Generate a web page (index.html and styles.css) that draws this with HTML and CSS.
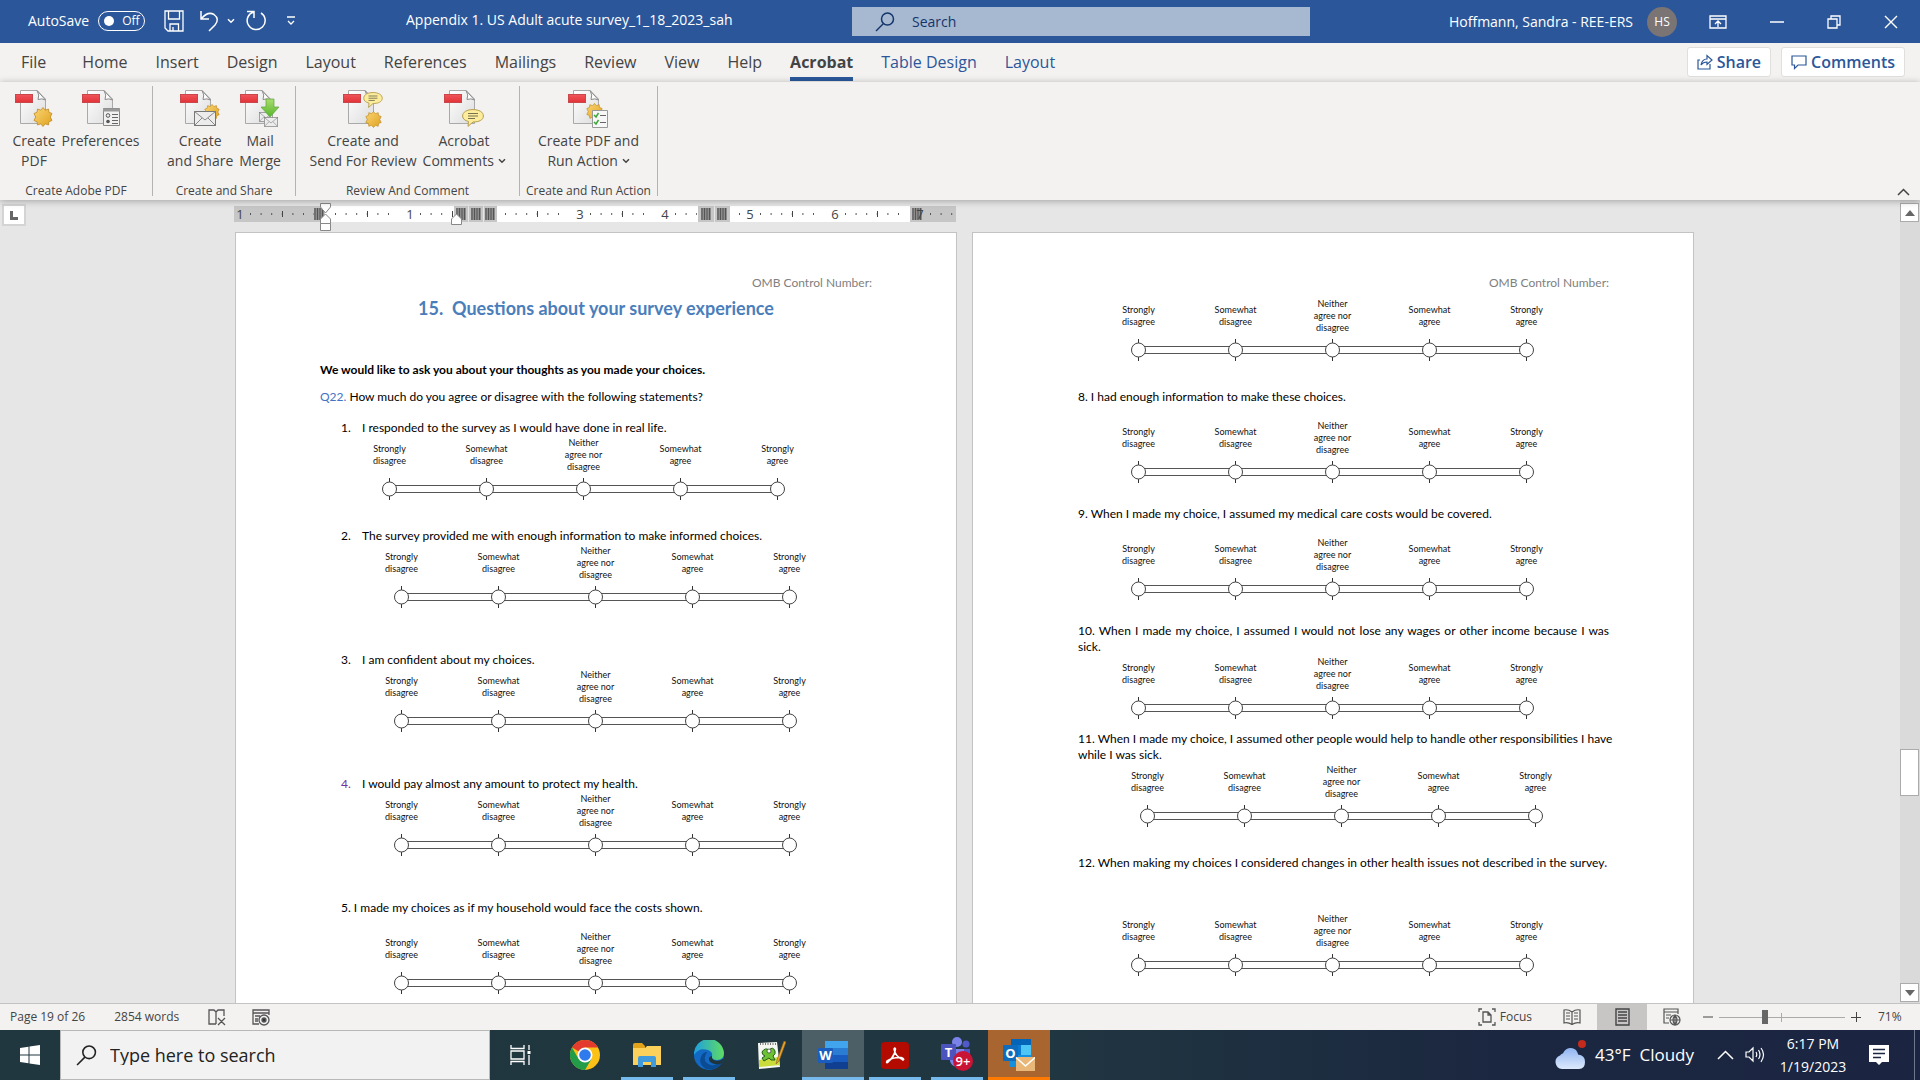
FILE: index.html
```
<!DOCTYPE html>
<html lang="en">
<head>
<meta charset="utf-8">
<title>Appendix 1. US Adult acute survey_1_18_2023_sah</title>
<link rel="stylesheet" href="styles.css">
</head>
<body>
<svg class="defs" aria-hidden="true">
  <defs>
    <linearGradient id="g-page" x1="0" y1="0" x2="1" y2="1"><stop offset="0" stop-color="#fff"/><stop offset="1" stop-color="#dcdcdc"/></linearGradient>
    <linearGradient id="g-red" x1="0" y1="0" x2="0" y2="1"><stop offset="0" stop-color="#f0555a"/><stop offset="1" stop-color="#e23338"/></linearGradient>
    <linearGradient id="g-gold" x1="0" y1="0" x2="1" y2="1"><stop offset="0" stop-color="#fbd574"/><stop offset="1" stop-color="#dfa21f"/></linearGradient>
    <linearGradient id="g-green" x1="0" y1="0" x2="0" y2="1"><stop offset="0" stop-color="#a8dd6e"/><stop offset="1" stop-color="#57b52b"/></linearGradient>
    <linearGradient id="g-edge" x1="0" y1="0" x2="1" y2="0"><stop offset="0" stop-color="#1e9fe0"/><stop offset="1" stop-color="#5fdc62"/></linearGradient>
    <linearGradient id="g-cloud" x1="0" y1="0" x2="0" y2="1"><stop offset="0" stop-color="#8fb4f2"/><stop offset="1" stop-color="#dce9fb"/></linearGradient>
  </defs>
  <symbol id="pdf" viewBox="0 0 38 38">
    <path d="M5.500 .5H22L30.500 9V33.500H5.500Z" fill="url(#g-page)" stroke="#a9a9a9"/>
    <path d="M22 .5Q25 5 23 9.500Q27 8 30.500 10Z" fill="#fff" stroke="#8b8b8b"/>
    <rect x=".5" y="4.500" width="17" height="8" fill="url(#g-red)" stroke="#c9474b"/>
  </symbol>
  <symbol id="star" viewBox="0 0 20 20">
    <path d="M10 .5L12.200 3.200L15.500 2L15.900 5.200L19 6.500L17.300 10L19 13.500L15.900 14.800L15.500 18L12.200 16.800L10 19.500L7.800 16.800L4.500 18L4.100 14.800L1 13.500L2.700 10L1 6.500L4.100 5.200L4.500 2L7.800 3.200Z" fill="url(#g-gold)" stroke="#c08a1e" stroke-width=".8"/>
  </symbol>
  <symbol id="bubble" viewBox="0 0 22 18">
    <path d="M11 .6C17 .6 21.400 3 21.400 7C21.400 11 17 13 11 13L6 17.400L6.500 12.500C3 11.500 .6 10 .6 7C.6 3 5 .6 11 .6Z" fill="#fcec9c" stroke="#b59d4d"/>
    <path d="M6 4.500H16M6 7H16M6 9.500H13" stroke="#77714f" fill="none"/>
  </symbol>
  <symbol id="envelope" viewBox="0 0 22 15">
    <rect x=".5" y=".5" width="21" height="14" fill="#ececec" stroke="#777"/>
    <path d="M.5 .5L11 9L21.500 .5M.5 14.500L8 7M21.500 14.500L14 7" fill="none" stroke="#888"/>
  </symbol>
  <symbol id="lens" viewBox="0 0 20 20">
    <circle cx="12.500" cy="7" r="6" fill="none" stroke="currentColor" stroke-width="1.500"/>
    <path d="M8.500 11.500L1 19" stroke="currentColor" stroke-width="1.500"/>
  </symbol>
  <symbol id="chevron" viewBox="0 0 8 6"><path d="M1 1.200L4 4.200L7 1.200" fill="none" stroke="currentColor" stroke-width="1.500"/></symbol>
  <symbol id="track" viewBox="0 0 485 22">
    <path d="M48 7.500H436M48 14.500H436" stroke="#555"/>
    <path d="M48.500 0V22M145.500 0V22M242.500 0V22M339.500 0V22M436.500 0V22" stroke="#333"/>
    <g fill="#fff" stroke="#444"><circle cx="48.500" cy="11" r="7"/><circle cx="145.500" cy="11" r="7"/><circle cx="242.500" cy="11" r="7"/><circle cx="339.500" cy="11" r="7"/><circle cx="436.500" cy="11" r="7"/></g>
  </symbol>
  <symbol id="colmark" viewBox="0 0 10 12">
    <path d="M0 1H10M0 3H10M0 5H10M0 7H10M0 9H10M0 11H10M1 0V12M3.500 0V12M6 0V12M8.500 0V12" stroke="#555"/>
  </symbol>
</svg>

<header class="titlebar">
  <div class="quick">
    <label class="autosave">AutoSave <button class="toggle" type="button"><span class="knob"></span>Off</button></label>
    <button class="tool" type="button" aria-label="Save"><svg width="20" height="22" viewBox="0 0 20 22" fill="none" stroke="#fff" stroke-width="1.300"><path d="M1 1H19V21H4L1 18Z"/><path d="M4.500 1V9H15.500V1M6 21V14H14.500V21M9 17V21"/></svg></button>
    <button class="tool undo" type="button" aria-label="Undo"><svg width="20" height="22" viewBox="0 0 20 22" fill="none" stroke="#fff" stroke-width="1.500"><path d="M1 1V9H9M1.500 8.500Q8 1 14 4.500Q20 9 15 15L9 21"/></svg></button>
    <button class="tool more" type="button" aria-label="Undo history"><svg width="8" height="6"><use href="#chevron"/></svg></button>
    <button class="tool" type="button" aria-label="Repeat"><svg width="22" height="22" viewBox="0 0 22 22" fill="none" stroke="#fff" stroke-width="1.500"><path d="M2 1.500H9V8M8.500 2A9 9 0 1 0 16 3"/></svg></button>
    <button class="tool customize" type="button" aria-label="Customize toolbar"><svg width="10" height="10" viewBox="0 0 10 10" fill="none" stroke="#fff" stroke-width="1.300"><path d="M1 1H9M2 5L5 8L8 5"/></svg></button>
  </div>
  <h1 class="filename">Appendix 1. US Adult acute survey_1_18_2023_sah</h1>
  <label class="search"><svg width="20" height="20"><use href="#lens"/></svg><input class="search-input" type="text" placeholder="Search" aria-label="Search"></label>
  <div class="account">
    <span class="user">Hoffmann, Sandra - REE-ERS</span>
    <span class="avatar">HS</span>
    <div class="window-buttons">
      <button class="tool" type="button" aria-label="Ribbon display options"><svg width="18" height="14" viewBox="0 0 18 14" fill="none" stroke="#fff" stroke-width="1.300"><path d="M1 1H17V13H1ZM1 4H17M9 12V6M6 9L9 6L12 9"/></svg></button>
      <button class="tool" type="button" aria-label="Minimize"><svg width="14" height="14" viewBox="0 0 14 14" stroke="#fff" stroke-width="1.500"><path d="M0 7H14"/></svg></button>
      <button class="tool" type="button" aria-label="Restore"><svg width="14" height="14" viewBox="0 0 14 14" fill="none" stroke="#fff" stroke-width="1.300"><path d="M1 4H10V13H1ZM4 4V1H13V10H10"/></svg></button>
      <button class="tool" type="button" aria-label="Close"><svg width="14" height="14" viewBox="0 0 14 14" stroke="#fff" stroke-width="1.400"><path d="M1 1L13 13M13 1L1 13"/></svg></button>
    </div>
  </div>
</header>

<nav class="tabs">
  <button class="tab file" type="button">File</button>
  <button class="tab" type="button">Home</button>
  <button class="tab" type="button">Insert</button>
  <button class="tab" type="button">Design</button>
  <button class="tab" type="button">Layout</button>
  <button class="tab" type="button">References</button>
  <button class="tab" type="button">Mailings</button>
  <button class="tab" type="button">Review</button>
  <button class="tab" type="button">View</button>
  <button class="tab" type="button">Help</button>
  <button class="tab active" type="button">Acrobat</button>
  <button class="tab context" type="button">Table Design</button>
  <button class="tab context" type="button">Layout</button>
  <div class="tab-actions">
    <button class="action" type="button"><svg width="16" height="16" viewBox="0 0 16 16" fill="none" stroke="#2b579a" stroke-width="1.200"><path d="M3 6H1V15H13V10M4 11Q5 5 10 5V1.500L15 6L10 10.500V8Q6 8 4 11Z"/></svg>Share</button>
    <button class="action" type="button"><svg width="16" height="16" viewBox="0 0 16 16" fill="none" stroke="#2b579a" stroke-width="1.200"><path d="M1 2H15V11H7L3.500 14.500V11H1Z"/></svg>Comments</button>
  </div>
</nav>

<section class="ribbon">
  <div class="group g-create">
    <div class="commands">
      <button class="command" type="button"><svg width="38" height="38"><use href="#pdf" width="38" height="38"/><use href="#star" x="18" y="17" width="20" height="20"/></svg>Create<br>PDF</button>
      <button class="command" type="button"><svg width="38" height="38"><use href="#pdf" width="38" height="38"/><path d="M21.500 18.500H37.500V35.500H21.500Z" fill="#f1f1f1" stroke="#888"/><path d="M21 20H38" stroke="#999" stroke-width="3"/><circle cx="26" cy="25.500" r="1.800" fill="none" stroke="#555"/><circle cx="26" cy="31.500" r="1.800" fill="#555"/><path d="M30 24.500H36M30 27.500H36M30 30.500H36M30 33.500H36" stroke="#666"/></svg>Preferences</button>
    </div>
    <span class="group-name">Create Adobe PDF</span>
  </div>
  <div class="group g-share">
    <div class="commands">
      <button class="command" type="button"><svg width="40" height="38"><use href="#pdf" width="38" height="38"/><use href="#star" x="24" y="14" width="16" height="16"/><use href="#envelope" x="14" y="21" width="22" height="15"/></svg>Create<br>and Share</button>
      <button class="command" type="button"><svg width="40" height="38"><use href="#pdf" width="38" height="38"/><use href="#envelope" x="19" y="22" width="14" height="10"/><use href="#envelope" x="24" y="27" width="14" height="10"/><path d="M26 9H34V17H39L30 27L21 17H26Z" fill="url(#g-green)" stroke="#5ca33b" stroke-width=".7"/></svg>Mail<br>Merge</button>
    </div>
    <span class="group-name">Create and Share</span>
  </div>
  <div class="group g-review">
    <div class="commands">
      <button class="command" type="button"><svg width="40" height="38"><use href="#pdf" width="38" height="38"/><use href="#bubble" x="20" y="2" width="20" height="16"/><use href="#star" x="22" y="21" width="17" height="17"/></svg>Create and<br>Send For Review</button>
      <button class="command" type="button"><svg width="40" height="38"><use href="#pdf" width="38" height="38"/><use href="#bubble" x="18" y="19" width="22" height="18"/></svg>Acrobat<br>Comments <svg class="drop" width="8" height="6"><use href="#chevron"/></svg></button>
    </div>
    <span class="group-name">Review And Comment</span>
  </div>
  <div class="group g-action">
    <div class="commands">
      <button class="command" type="button"><svg width="40" height="38"><use href="#pdf" width="38" height="38"/><use href="#star" x="18" y="13" width="17" height="17"/><path d="M24.500 20.500H39.500V37.500H24.500Z" fill="#f7f7f7" stroke="#999"/><path d="M26 25L28 27L30.500 23M26 32L28 34L30.500 30" fill="none" stroke="#3da83a" stroke-width="1.500"/><path d="M32 25.500H38M32 32.500H38" stroke="#666"/></svg>Create PDF and<br>Run Action <svg class="drop" width="8" height="6"><use href="#chevron"/></svg></button>
    </div>
    <span class="group-name">Create and Run Action</span>
  </div>
  <button class="collapse" type="button" aria-label="Collapse the ribbon"><svg width="13" height="8" viewBox="0 0 13 8" fill="none" stroke="#444" stroke-width="1.500"><path d="M1 7L6.500 1.500L12 7"/></svg></button>
</section>

<main class="workspace">
  <button class="tab-stop" type="button" aria-label="Tab stop"><svg width="8" height="10" viewBox="0 0 8 10"><path d="M1.500 1V8.500H8" fill="none" stroke="#666" stroke-width="3"/></svg></button>
  <div class="canvas">
    <div class="pages">
      <svg class="ruler" viewBox="0 0 722 28" width="722" height="28">
        <rect y="3" width="722" height="16" fill="#c6c6c6"/>
        <path d="M91 3H220V19H91ZM263 3H464V19H263ZM496 3H676V19H496Z" fill="#fff"/>
        <path d="M234.500 3V19M249.500 3V19M480.500 3V19" stroke="#e6e6e6"/>
        <path d="M16 11H80M101 11H162M186 11H217M271 11H332M356 11H417M441 11H463M505 11H508M526 11H588M611 11H674M696 11H720" stroke="#555" stroke-width="2" stroke-dasharray="1 9.600"/>
        <path d="M48.500 8V14M133.500 8V14M218.500 8V14M303.500 8V14M388.500 8V14M558.500 8V14M643.500 8V14" stroke="#444"/>
        <use href="#colmark" x="80" y="5" width="10" height="12"/><use href="#colmark" x="222" y="5" width="10" height="12"/><use href="#colmark" x="237" y="5" width="10" height="12"/><use href="#colmark" x="251" y="5" width="10" height="12"/><use href="#colmark" x="467" y="5" width="10" height="12"/><use href="#colmark" x="483" y="5" width="10" height="12"/><use href="#colmark" x="678" y="5" width="10" height="12"/>
        <g class="ruler-text"><text x="6" y="16">1</text><text x="176" y="16">1</text><text x="346" y="16">3</text><text x="431" y="16">4</text><text x="516" y="16">5</text><text x="601" y="16">6</text><text x="686" y="16">7</text></g>
        <path d="M86.500 .5H96.500V4L91.500 10L86.500 4ZM91.500 11L96.500 16V20.500H86.500V16ZM86.500 20.500H96.500V27.500H86.500ZM222.500 11L227.500 16V21.500H217.500V16Z" fill="#fff" stroke="#888"/>
      </svg>
      <article class="page">
        <p class="omb">OMB Control Number:</p>
        <h2 class="heading">15.&nbsp; Questions about your survey experience</h2>
        <p class="lead">We would like to ask you about your thoughts as you made your choices.</p>
        <p class="intro"><span class="qnum">Q22.</span> How much do you agree or disagree with the following statements?</p>

        <p class="item first"><span class="num">1.</span>I responded to the survey as I would have done in real life.</p>
        <div class="scale base"><span>Strongly<br>disagree</span><span>Somewhat<br>disagree</span><span>Neither<br>agree nor<br>disagree</span><span>Somewhat<br>agree</span><span>Strongly<br>agree</span><svg class="bar"><use href="#track"/></svg></div>

        <p class="item near"><span class="num">2.</span>The survey provided me with enough information to make informed choices.</p>
        <div class="scale"><span>Strongly<br>disagree</span><span>Somewhat<br>disagree</span><span>Neither<br>agree nor<br>disagree</span><span>Somewhat<br>agree</span><span>Strongly<br>agree</span><svg class="bar"><use href="#track"/></svg></div>

        <p class="item"><span class="num">3.</span>I am confident about my choices.</p>
        <div class="scale"><span>Strongly<br>disagree</span><span>Somewhat<br>disagree</span><span>Neither<br>agree nor<br>disagree</span><span>Somewhat<br>agree</span><span>Strongly<br>agree</span><svg class="bar"><use href="#track"/></svg></div>

        <p class="item"><span class="num revised">4.</span>I would pay almost any amount to protect my health.</p>
        <div class="scale"><span>Strongly<br>disagree</span><span>Somewhat<br>disagree</span><span>Neither<br>agree nor<br>disagree</span><span>Somewhat<br>agree</span><span>Strongly<br>agree</span><svg class="bar"><use href="#track"/></svg></div>

        <p class="item">5. I made my choices as if my household would face the costs shown.</p>
        <div class="scale spaced"><span>Strongly<br>disagree</span><span>Somewhat<br>disagree</span><span>Neither<br>agree nor<br>disagree</span><span>Somewhat<br>agree</span><span>Strongly<br>agree</span><svg class="bar"><use href="#track"/></svg></div>
      </article>
      <article class="page">
        <p class="omb">OMB Control Number:</p>
        <div class="scale top"><span>Strongly<br>disagree</span><span>Somewhat<br>disagree</span><span>Neither<br>agree nor<br>disagree</span><span>Somewhat<br>agree</span><span>Strongly<br>agree</span><svg class="bar"><use href="#track"/></svg></div>

        <p class="item near">8. I had enough information to make these choices.</p>
        <div class="scale spaced"><span>Strongly<br>disagree</span><span>Somewhat<br>disagree</span><span>Neither<br>agree nor<br>disagree</span><span>Somewhat<br>agree</span><span>Strongly<br>agree</span><svg class="bar"><use href="#track"/></svg></div>

        <p class="item middle">9. When I made my choice, I assumed my medical care costs would be covered.</p>
        <div class="scale spaced"><span>Strongly<br>disagree</span><span>Somewhat<br>disagree</span><span>Neither<br>agree nor<br>disagree</span><span>Somewhat<br>agree</span><span>Strongly<br>agree</span><svg class="bar"><use href="#track"/></svg></div>

        <p class="item middle wrapped">10. When I made my choice, I assumed I would not lose any wages or other income because I was sick.</p>
        <div class="scale"><span>Strongly<br>disagree</span><span>Somewhat<br>disagree</span><span>Neither<br>agree nor<br>disagree</span><span>Somewhat<br>agree</span><span>Strongly<br>agree</span><svg class="bar"><use href="#track"/></svg></div>

        <p class="item close">11. When I made my choice, I assumed other people would help to handle other responsibilities I have<br>while I was sick.</p>
        <div class="scale indented"><span>Strongly<br>disagree</span><span>Somewhat<br>disagree</span><span>Neither<br>agree nor<br>disagree</span><span>Somewhat<br>agree</span><span>Strongly<br>agree</span><svg class="bar"><use href="#track"/></svg></div>

        <p class="item near">12. When making my choices I considered changes in other health issues not described in the survey<b class="revised">.</b></p>
        <div class="scale far"><span>Strongly<br>disagree</span><span>Somewhat<br>disagree</span><span>Neither<br>agree nor<br>disagree</span><span>Somewhat<br>agree</span><span>Strongly<br>agree</span><svg class="bar"><use href="#track"/></svg></div>
      </article>
    </div>
  </div>
  <div class="scrollbar">
    <button class="arrow" type="button" aria-label="Scroll up"><svg width="10" height="6"><path d="M0 6L5 0L10 6Z" fill="#666"/></svg></button>
    <div class="rail"><div class="thumb"></div></div>
    <button class="arrow" type="button" aria-label="Scroll down"><svg width="10" height="6"><path d="M0 0L5 6L10 0Z" fill="#666"/></svg></button>
  </div>
</main>

<footer class="status">
  <span class="page-count">Page 19 of 26</span>
  <span class="words">2854 words</span>
  <button class="tool proof" type="button" aria-label="Proofing"><svg width="18" height="17" viewBox="0 0 18 17" fill="none" stroke="#555" stroke-width="1.300"><path d="M8 15H1V1H6L8 3L10 1H16V7M8 3V15M10 9L17 16M17 9L10 16"/></svg></button>
  <button class="tool" type="button" aria-label="Macro recording"><svg width="18" height="17" viewBox="0 0 18 17" fill="none" stroke="#555" stroke-width="1.300"><path d="M7 15H1V1H17V6M1 4H17M3 7H8M3 10H6M3 12H6"/><circle cx="12" cy="11" r="5"/><circle cx="12" cy="11" r="2" fill="#333"/></svg></button>
  <div class="views">
    <button class="tool focus" type="button"><svg width="18" height="18" viewBox="0 0 18 18" fill="none" stroke="#555" stroke-width="1.300"><path d="M4 1H1V4M14 1H17V4M4 17H1V14M14 17H17V14M5 4H10L13 7V14H5ZM10 4V7H13"/></svg>Focus</button>
    <button class="tool view" type="button" aria-label="Read mode"><svg width="18" height="16" viewBox="0 0 18 16" fill="none" stroke="#555" stroke-width="1.200"><path d="M9 3Q5 0 1 1V14Q5 13 9 15.500Q13 13 17 14V1Q13 0 9 3V15M3 4H7M3 7H7M3 10H7M11 4H15M11 7H15M11 10H15"/></svg></button>
    <button class="tool view selected" type="button" aria-label="Print layout"><svg width="15" height="18" viewBox="0 0 15 18" fill="none" stroke="#444" stroke-width="1.400"><path d="M1 1H14V17H1ZM3 4H12M3 7H12M3 10H12M3 13H12"/></svg></button>
    <button class="tool view" type="button" aria-label="Web layout"><svg width="18" height="18" viewBox="0 0 18 18" fill="none" stroke="#555" stroke-width="1.200"><path d="M6 15H1V1H15V6M1 4H15M3 7H8M3 10H6"/><circle cx="12" cy="12" r="5"/><path d="M7 12H17M12 7V17M12 7Q8 12 12 17Q16 12 12 7"/></svg></button>
  </div>
  <span class="sign"><svg width="10" height="10"><path d="M0 5H10" stroke="#444"/></svg></span>
  <input class="zoom" type="range" min="0" max="125" value="45" aria-label="Zoom">
  <span class="sign"><svg width="10" height="10"><path d="M0 5.500H10M5.500 0V10" stroke="#444"/></svg></span>
  <span class="percent">71%</span>
</footer>

<footer class="taskbar">
  <button class="start" type="button" aria-label="Start"><svg width="20" height="20" viewBox="0 0 20 20" fill="#fff"><path d="M0 3L8.500 1.700V9.500H0ZM9.500 1.500L20 0V9.500H9.500ZM0 10.500H8.500V18.300L0 17ZM9.500 10.500H20V20L9.500 18.500Z"/></svg></button>
  <label class="task-search"><svg width="21" height="21"><use href="#lens"/></svg><input class="task-input" type="text" placeholder="Type here to search" aria-label="Type here to search"></label>
  <div class="apps">
    <button class="app task-view" type="button" aria-label="Task view"><svg width="21" height="20" viewBox="0 0 21 20" fill="none" stroke="#fff" stroke-width="1.300"><path d="M1 0V3.500H14V0M1 6H14V14H1ZM1 20V16.500H14V20M19 0V5M19 10V20"/><path d="M17.500 6H20.500V9H17.500Z" fill="#fff" stroke="none"/></svg></button>
    <button class="app" type="button" aria-label="Chrome"><svg width="30" height="30" viewBox="0 0 30 30"><circle cx="15" cy="15" r="15" fill="#fbc116"/><path d="M15 15L2 7.500A15 15 0 0 1 28 7.500H15Z" fill="#e33b2e"/><path d="M2 7.500A15 15 0 0 0 15 30L21.500 18.800L15 15L8.500 18.800Z" fill="#229c48"/><circle cx="15" cy="15" r="7.500" fill="#fff"/><circle cx="15" cy="15" r="5.800" fill="#2f7bed"/></svg></button>
    <button class="app open" type="button" aria-label="File Explorer"><svg width="30" height="24" viewBox="0 0 30 24"><path d="M1 2Q1 0 3 0H10L13 3V8H1Z" fill="#e2a21a"/><path d="M1 5H13L15 3H29V22H1Z" fill="#fbd05b"/><path d="M6 24V15Q6 13 8 13H22Q24 13 24 15V24H19V19H11V24Z" fill="#3f9bdc"/></svg></button>
    <button class="app open" type="button" aria-label="Edge"><svg width="30" height="30" viewBox="0 0 30 30"><circle cx="15" cy="15" r="15" fill="#1169c4"/><path d="M0 15A15 15 0 0 1 30 13Q30 20 23 20Q17 20 18 16Q19 12 14 10Q5 7 0 15Z" fill="url(#g-edge)"/><path d="M13 12Q7 22 17 25Q22 26 27 22Q29 21 28 23Q22 31 12 29Q4 24 7 17Q9 12 13 12Z" fill="#0b4b92"/><path d="M18 16Q17 20 23 21Q27 21 30 18L28 23Q22 26 16 22Q13 17 18 16Z" fill="#20343d"/></svg></button>
    <button class="app" type="button" aria-label="Notepad++"><svg width="29" height="28" viewBox="0 0 29 28"><path d="M1 2L20 1L23 26L2 28Z" fill="#f5f7f2"/><path d="M2 19L22 16L23 24L2 26Z" fill="#c9dc3b"/><path d="M5 11Q8 6 12 9Q16 5 18 10Q19 13 16 15L18 19H14L12 17L7 20L5 17L8 15Q5 14 5 11Z" fill="#6cc232" stroke="#235f16"/><circle cx="12" cy="10" r="2" fill="#fff" stroke="#333" stroke-width=".7"/><path d="M3 3H20" stroke="#777" stroke-dasharray="1 1.500" stroke-width="2"/><path d="M27 0L20 19L19 23L22 20L29 1Z" fill="#eaa52b" stroke="#875c19" stroke-width=".6"/></svg></button>
    <button class="app open current" type="button" aria-label="Word"><svg width="30" height="28" viewBox="0 0 30 28"><path d="M7 0H30V7H7Z" fill="#41a5ee"/><path d="M7 7H30V14H7Z" fill="#2b7cd3"/><path d="M7 14H30V21H7Z" fill="#185abd"/><path d="M7 21H30V28H7Z" fill="#103f91"/><rect y="7" width="15" height="15" rx="1" fill="#1a5dbe"/><text class="logo-letter" x="7.500" y="19" text-anchor="middle">W</text></svg></button>
    <button class="app open" type="button" aria-label="Acrobat"><svg width="28" height="27" viewBox="0 0 28 27"><rect width="28" height="27" rx="4" fill="#b30b00"/><path d="M6 20Q13 17 14.500 7Q14 5 13 7Q14 14 22 18Q24 17 20 15.500Q12 15 6 19Q5 21 6.500 20.500Q10 18 13.500 11" fill="none" stroke="#fff" stroke-width="1.600"/></svg></button>
    <button class="app open" type="button" aria-label="Teams"><svg width="32" height="38" viewBox="0 -3 32 38"><circle cx="25" cy="5" r="3.500" fill="#5059c9"/><circle cx="16" cy="3" r="5" fill="#7b83eb"/><path d="M20 10H29V22H20Z" fill="#5059c9"/><path d="M9 10H23V23Q22 28 16 28Q10 27 9 22Z" fill="#7b83eb"/><rect y="5" width="15" height="16" rx="1" fill="#4b53bc"/><text class="logo-letter" x="7.500" y="18" text-anchor="middle">T</text><circle cx="22" cy="22" r="10" fill="#ca1436"/><text class="badge-text" x="22" y="27" text-anchor="middle">9+</text></svg></button>
    <button class="app open alert" type="button" aria-label="Outlook"><svg width="32" height="36" viewBox="0 -2 32 36"><path d="M8 0H28V8H8Z" fill="#0364b8"/><path d="M8 6H18V16H8Z" fill="#0a79d0"/><path d="M18 6H28V16H18Z" fill="#4dc5f5"/><path d="M6 16H28V28H6Z" fill="#1490df"/><rect y="6" width="15" height="16" rx="1" fill="#0f6cbd"/><text class="logo-letter" x="7.500" y="19" text-anchor="middle">O</text><rect x="13" y="18" width="19" height="14" fill="#e9b878"/><path d="M13 18.500L22.500 27L32 18.500" fill="none" stroke="#fff" stroke-width="1.600"/></svg></button>
  </div>
  <div class="tray">
    <button class="weather" type="button"><svg width="31" height="31" viewBox="0 0 31 31"><path d="M7 29A7 7 0 0 1 5 15.500Q7 13 8 13.500A8 8 0 0 1 21 10Q23 13 23 14.500Q30 15 30 22Q30 29 24 29Z" fill="url(#g-cloud)"/><circle cx="27" cy="4" r="4" fill="#c42b1c"/></svg><span>43°F&nbsp; Cloudy</span></button>
    <button class="tool" type="button" aria-label="Hidden icons"><svg width="17" height="10" viewBox="0 0 17 10" fill="none" stroke="#fff" stroke-width="1.500"><path d="M1 9L8.500 1.500L16 9"/></svg></button>
    <button class="tool" type="button" aria-label="Volume"><svg width="21" height="18" viewBox="0 0 21 18" fill="none" stroke="#fff" stroke-width="1.200"><path d="M1 6H4L8 2V15L4 11H1ZM11 6Q12.500 8.500 11 11M13.500 4Q16.500 8.500 13.500 13M16 2Q21 8.500 16 16"/></svg></button>
    <time class="clock">6:17 PM<br>1/19/2023</time>
    <button class="tool notes" type="button" aria-label="Notifications"><svg width="20" height="20" viewBox="0 0 20 20"><path d="M0 0H20V17H13L10 20L7 17H0Z" fill="#fff"/><path d="M4 4.500H16M4 8.500H16M4 12.500H12" stroke="#1b2740" stroke-width="1.300"/></svg></button>
  </div>
</footer>
</body>
</html>
```
FILE: styles.css
```
* { box-sizing: border-box; }

body {
  margin: 0;
  height: 100vh;
  display: flex;
  flex-direction: column;
  overflow: hidden;
  background: #e6e6e6;
  color: #444;
  font: 15px/20px "Open Sans", "Noto Sans", sans-serif;
}

button, input {
  font: inherit;
  color: inherit;
  background: none;
  border: 0;
  padding: 0;
  margin: 0;
}

svg { display: block; flex: none; }
p, h1, h2 { margin: 0; }
.defs { position: absolute; width: 0; height: 0; }

.tool { display: flex; align-items: center; }

/* Title bar */
.titlebar {
  flex: none;
  height: 43px;
  display: grid;
  grid-template-columns: 406px 1fr 458px 610px;
  align-items: center;
  background: #2b579a;
  color: #fff;
  font-size: 14px;
}
.quick { display: flex; align-items: center; gap: 16px; padding: 0 0 2px 28px; }
.autosave { display: flex; align-items: center; gap: 9px; margin-right: 3px; }
.toggle {
  display: flex;
  align-items: center;
  gap: 8px;
  width: 47px;
  height: 20px;
  padding-left: 5px;
  border: 1px solid #fff;
  border-radius: 10px;
  font-size: 12px;
}
.knob { width: 10px; height: 10px; border-radius: 50%; background: #fff; }
.more { margin: 0 -6px 0 -9px; }
.customize { margin-left: 3px; }
.filename { padding-bottom: 4px; font-size: 14px; font-weight: 400; white-space: nowrap; }
.search {
  display: flex;
  align-items: center;
  gap: 17px;
  height: 29px;
  padding-left: 23px;
  background: #a6b9d1;
  color: #14356b;
}
.search-input { flex: 1; min-width: 0; }
.search-input::placeholder { color: #14356b; opacity: 1; }
.account { display: flex; align-items: center; justify-content: flex-end; padding-right: 22px; }
.user { margin-right: 14px; }
.avatar {
  width: 30px;
  height: 30px;
  border-radius: 50%;
  background: #7a7474;
  font-size: 12px;
  line-height: 30px;
  text-align: center;
}
.window-buttons { display: flex; gap: 43px; margin-left: 32px; }

/* Ribbon tabs */
.tabs {
  flex: none;
  display: flex;
  align-items: center;
  gap: 28px;
  height: 39px;
  padding: 0 15px 0 21px;
  background: #f3f2f1;
  font-size: 16px;
}
.tab { height: 36px; padding-top: 2px; border-bottom: 4px solid transparent; white-space: nowrap; }
.file { margin-right: 8px; }
.active { font-weight: 700; border-color: #2b579a; }
.context { color: #2b579a; }
.tab-actions { display: flex; gap: 10px; margin-left: auto; padding-bottom: 1px; }
.action {
  display: flex;
  align-items: center;
  gap: 4px;
  height: 30px;
  padding: 0 9px;
  border: 1px solid #e1dfdd;
  border-radius: 3px;
  background: #fff;
  color: #2b579a;
  font-size: 16px;
  font-weight: 600;
}

/* Ribbon */
.ribbon {
  flex: none;
  display: flex;
  height: 118px;
  padding: 4px 10px 4px 0;
  background: #f3f2f1;
  position: relative;
  z-index: 1;
  box-shadow: 0 1px 7px rgba(0, 0, 0, .3);
}
.group {
  display: flex;
  flex-direction: column;
  align-items: center;
  justify-content: space-between;
  border-right: 1px solid #b5b3b1;
}
.g-create { width: 153px; }
.g-share { width: 143px; }
.g-review { width: 224px; }
.g-action { width: 138px; }
.commands { display: flex; align-items: flex-start; gap: 6px; padding-top: 4px; }
.command {
  display: block;
  text-align: center;
  white-space: nowrap;
  font-size: 14px;
  line-height: 20px;
}
.command > svg:first-child { margin: 0 auto 3px; }
.drop { display: inline-block; vertical-align: 2px; }
.group-name { font-size: 12px; line-height: 16px; margin-bottom: -3px; white-space: nowrap; }
.collapse { margin: auto 0 0 auto; }

/* Document area */
.workspace { flex: 1; min-height: 0; display: flex; border-bottom: 1px solid #c3c3c3; }
.tab-stop {
  flex: none;
  display: flex;
  align-items: center;
  justify-content: center;
  width: 24px;
  height: 22px;
  margin: 4px 0 0 2px;
  border: 2px solid #d4d4d4;
  background: #fff;
}
.canvas {
  flex: 1;
  min-width: 0;
  display: flex;
  justify-content: center;
  padding: 3px 0 0 3px;
  overflow: hidden;
}
.pages { display: grid; grid-template-columns: 722px 722px; grid-template-rows: 28px auto; column-gap: 15px; row-gap: 1px; }
.ruler { grid-column: 1 / -1; margin-left: -1px; }
.ruler-text { font: 13px "Open Sans", "Noto Sans", sans-serif; text-anchor: middle; fill: #444; }
.page {
  min-height: 932px;
  padding: 42px 84px 0;
  border: 1px solid #c3c3c3;
  background: #fff;
  color: #000;
  font: 12px/16px Lato, "Open Sans", sans-serif;
}
.omb { text-align: right; color: #808080; }
.heading { margin-top: 5px; font-size: 18px; line-height: 24px; text-align: center; color: #4a7ebb; }
.lead { margin-top: 42px; font-weight: 700; }
.intro { margin-top: 11px; }
.qnum { color: #4472c4; }
.item { margin: 43px 0 0 21px; white-space: nowrap; }
.item.first { margin-top: 15px; }
.item.near { margin-top: 27px; }
.item.middle { margin-top: 22px; }
.item.close { margin-top: 11px; }
.item.wrapped { white-space: normal; text-align: justify; }
.num { display: inline-block; width: 21px; }
.revised { color: #7030a0; }

.scale {
  display: grid;
  grid-template-columns: repeat(5, 97px);
  grid-template-rows: 36px 22px;
  row-gap: 5px;
  align-items: center;
  margin: 1px 0 0 33px;
  padding-bottom: 1px;
  color: #111;
  font-size: 9px;
  line-height: 12px;
  text-align: center;
}
.scale.base { margin-left: 21px; }
.scale.top { margin-top: 7px; }
.scale.spaced { margin-top: 15px; }
.scale.far { margin-top: 42px; }
.scale.indented { margin-left: 42px; }
.bar { grid-column: 1 / -1; width: 485px; height: 22px; }

/* Vertical scroll bar */
.scrollbar { flex: none; display: flex; flex-direction: column; width: 20px; padding: 3px 1px 1px 0; background: #dadada; }
.arrow {
  display: flex;
  align-items: center;
  justify-content: center;
  height: 19px;
  border: 1px solid #ababab;
  background: #fff;
}
.rail { flex: 1; display: flex; flex-direction: column; }
.rail::before { content: ""; flex: 527; }
.rail::after { content: ""; flex: 187; }
.thumb { height: 47px; border: 1px solid #ababab; background: #fff; }

/* Status bar */
.status {
  flex: none;
  display: flex;
  align-items: center;
  height: 26px;
  padding-left: 10px;
  background: #f3f2f1;
  font-size: 12px;
}
.words { margin: 0 29px; }
.proof { margin-right: 26px; }
.views { display: flex; align-self: stretch; margin-left: auto; }
.focus { gap: 4px; margin-right: 15px; }
.view { width: 50px; justify-content: center; }
.selected { background: #c8c6c4; }
.sign { margin: 0 6px; }
.zoom {
  appearance: none;
  width: 126px;
  height: 18px;
  background: linear-gradient(#aaa, #aaa) 50% 50% / 100% 1px no-repeat, linear-gradient(#aaa, #aaa) 62px 50% / 1px 9px no-repeat;
}
.zoom::-webkit-slider-thumb { appearance: none; width: 6px; height: 14px; background: #666; }
.percent { width: 53px; padding-left: 11px; }

/* Windows taskbar */
.taskbar {
  flex: none;
  display: flex;
  height: 50px;
  background: linear-gradient(90deg, #20373f 0%, #203640 55%, #1b2740 78%, #1b2542 100%);
  color: #fff;
}
.start { display: flex; align-items: center; justify-content: center; width: 60px; }
.task-search {
  display: flex;
  align-items: center;
  gap: 13px;
  width: 430px;
  padding-left: 15px;
  border: 1px solid #b8b8b8;
  background: #f2f2f2;
  color: #222;
  font-size: 18px;
}
.task-input { flex: 1; min-width: 0; }
.task-input::placeholder { color: #222; opacity: 1; }
.apps { display: flex; }
.app {
  display: flex;
  align-items: center;
  justify-content: center;
  width: 62px;
}
.task-view { width: 60px; margin-right: 4px; }
.open { background: linear-gradient(#76b9ed, #76b9ed) 50% 100% / 52px 3px no-repeat; }
.open.current { background: linear-gradient(#76b9ed, #76b9ed) 50% 100% / 100% 3px no-repeat, #4d5f66; }
.open.alert { background: linear-gradient(#ff7a00, #ff7a00) 50% 100% / 100% 3px no-repeat, #a8652f; }
.logo-letter { font: 700 13px "Open Sans", sans-serif; fill: #fff; }
.badge-text { font: 600 13px "Open Sans", sans-serif; fill: #fff; }
.tray { display: flex; align-items: center; gap: 11px; margin-left: auto; padding-right: 5px; }
.weather { display: flex; align-items: center; gap: 9px; margin-right: 12px; font-size: 17px; }
.clock { width: 74px; margin-left: -1px; font-size: 14px; line-height: 23px; text-align: center; }
.notes { margin-left: 8px; padding-right: 25px; height: 50px; border-right: 1px solid #6d7789; }
```
